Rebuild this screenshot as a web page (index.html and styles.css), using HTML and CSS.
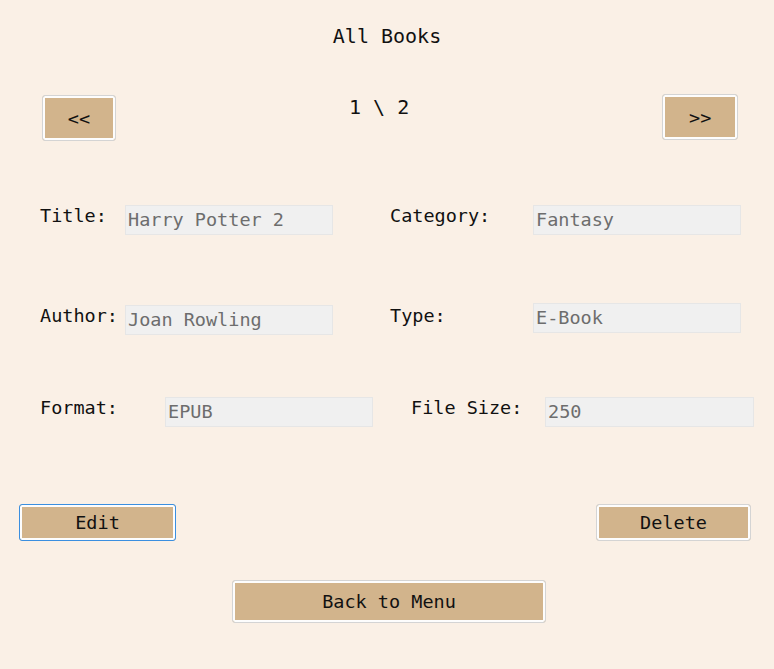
FILE: index.html
```html
<!DOCTYPE html>
<html>
<head>
<meta charset="utf-8">
<link rel="stylesheet" href="styles.css">
</head>
<body>
<main class="form">
  <h1 class="title">All Books</h1>
  <div class="pager">
    <button class="btn btn-prev">&lt;&lt;</button>
    <span class="page-count">1 \ 2</span>
    <button class="btn btn-next">&gt;&gt;</button>
  </div>

  <div class="row row-1">
    <label class="lbl lbl-a">Title:</label>
    <div class="box">Harry Potter 2</div>
    <label class="lbl lbl-b">Category:</label>
    <div class="box">Fantasy</div>
  </div>

  <div class="row row-2">
    <label class="lbl lbl-a">Author:</label>
    <div class="box">Joan Rowling</div>
    <label class="lbl lbl-b">Type:</label>
    <div class="box box-up">E-Book</div>
  </div>

  <div class="row row-3">
    <label class="lbl lbl-c">Format:</label>
    <div class="box">EPUB</div>
    <label class="lbl lbl-d">File Size:</label>
    <div class="box box-wide">250</div>
  </div>

  <div class="actions">
    <button class="btn btn-edit">Edit</button>
    <button class="btn btn-delete">Delete</button>
  </div>

  <div class="back">
    <button class="btn btn-back">Back to Menu</button>
  </div>
</main>
</body>
</html>
```

FILE: styles.css
```css
html, body {
  margin: 0;
  padding: 0;
  background: #faf0e6;
}
body {
  width: 774px;
  height: 669px;
  overflow: hidden;
  font-family: "DejaVu Sans Mono", "Liberation Mono", monospace;
  color: #111;
}
.form {
  display: flex;
  flex-direction: column;
}
.title {
  margin: 24px 0 0 0;
  font-size: 20px;
  font-weight: normal;
  line-height: 24px;
  height: 24px;
  text-align: center;
}
.btn {
  font-family: "DejaVu Sans Mono", "Liberation Mono", monospace;
  font-size: 18.5px;
  color: #111;
  background: #d2b48c;
  border: 1px solid #d4d4d4;
  border-radius: 3px;
  box-shadow: inset 0 0 0 2px #fdfdfd;
  padding: 0;
  margin: 0;
  cursor: pointer;
}
.pager {
  display: flex;
  align-items: flex-start;
  margin-top: 47px;
  padding-left: 42px;
}
.btn-prev {
  width: 74px;
  height: 46px;
}
.page-count {
  margin-left: 233px;
  margin-top: 0;
  font-size: 20px;
  line-height: 24px;
}
.btn-next {
  margin-left: 253px;
  margin-top: -1px;
  width: 76px;
  height: 46px;
}
.row {
  display: flex;
  align-items: flex-start;
  padding-left: 40px;
}
.row-1 { margin-top: 64px; }
.row-2 { margin-top: 70px; }
.row-3 { margin-top: 62px; }
.lbl {
  font-size: 18.5px;
  line-height: 22px;
  flex: none;
}
.lbl-a { width: 85px; }
.lbl-b { width: 143px; margin-left: 57px; }
.lbl-c { width: 125px; }
.lbl-d { width: 134px; margin-left: 38px; }
.box {
  box-sizing: border-box;
  width: 208px;
  height: 30px;
  background: #f0f0f0;
  border: 1px solid #e6e6e6;
  color: #6d6d6d;
  font-size: 18.5px;
  line-height: 28px;
  padding-left: 2px;
  flex: none;
}
.box-up { margin-top: -2px; }
.box-wide { width: 209px; }
.actions {
  display: flex;
  justify-content: space-between;
  margin-top: 77px;
  padding: 0 23px 0 19px;
}
.btn-edit {
  width: 157px;
  height: 37px;
  border-color: #3a8fe0;
  box-shadow: inset 0 0 0 2px #fdfdfd;
}
.btn-delete {
  width: 155px;
  height: 37px;
}
.back {
  display: flex;
  margin-top: 39px;
  padding-left: 232px;
}
.btn-back {
  width: 314px;
  height: 43px;
}
```
